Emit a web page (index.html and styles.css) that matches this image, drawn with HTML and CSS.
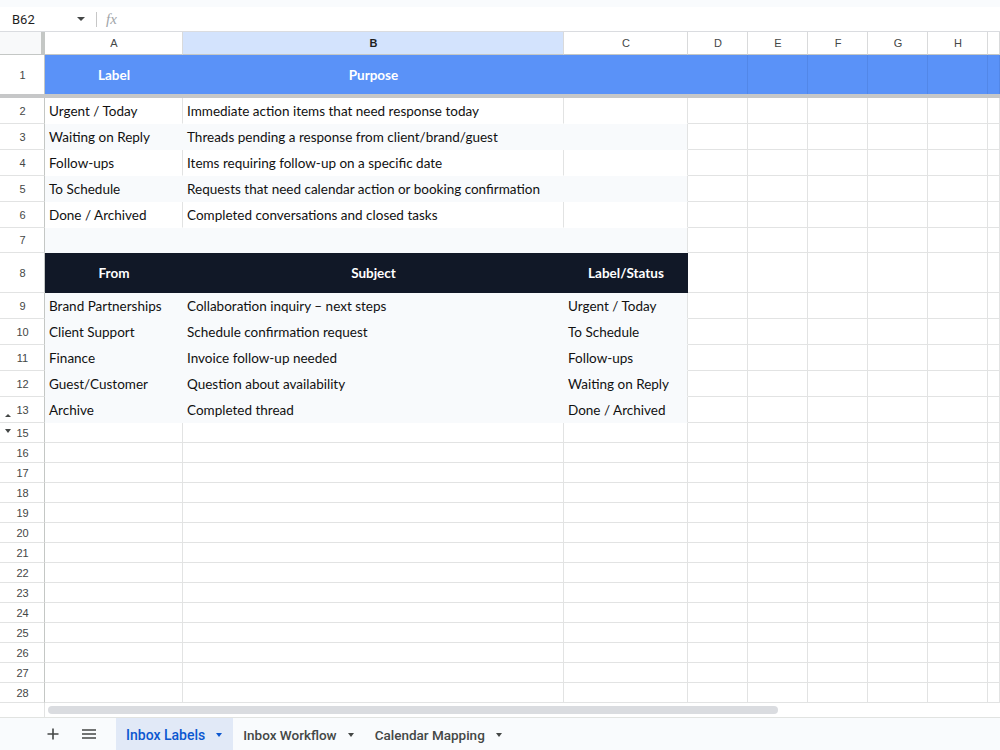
FILE: index.html
```html
<!DOCTYPE html>
<html lang="en">
    <head>
        <meta charset="UTF-8">
        <title>Inbox Labels</title>
        <link rel="stylesheet" href="styles.css">
    </head>
    <body>
        <div class="topstrip"></div>
        <div class="fbar">
            <div class="namebox">B62</div>
            <svg class="caret" width="8" height="4" viewBox="0 0 8 4"><path d="M0 0h8L4 4z" fill="#444746"/></svg>
            <div class="fsep"></div>
            <div class="fx">fx</div>
        </div>

        <div class="row colhead">
            <div class="corner"></div>
            <div>A</div>
            <div class="sel">B</div>
            <div>C</div>
            <div>D</div>
            <div>E</div>
            <div>F</div>
            <div>G</div>
            <div>H</div>
            <div></div>
        </div>

        <!-- header row (frozen) -->
        <div class="row r1">
            <div class="rh">1</div>
            <div class="blue">Label</div>
            <div class="blue">Purpose</div>
            <div class="blue"></div>
            <div class="blue out"></div>
            <div class="blue out"></div>
            <div class="blue out"></div>
            <div class="blue out"></div>
            <div class="blue out"></div>
            <div class="blue out"></div>
        </div>

        <div class="row r26">
            <div class="rh">2</div>
            <div class="plain">Urgent / Today</div>
            <div class="plain">Immediate action items that need response today</div>
            <div class="plain"></div>
            <div></div><div></div><div></div><div></div><div></div><div></div>
        </div>
        <div class="row r26">
            <div class="rh">3</div>
            <div class="band">Waiting on Reply</div>
            <div class="band">Threads pending a response from client/brand/guest</div>
            <div class="band edge"></div>
            <div></div><div></div><div></div><div></div><div></div><div></div>
        </div>
        <div class="row r26">
            <div class="rh">4</div>
            <div class="plain">Follow-ups</div>
            <div class="plain">Items requiring follow-up on a specific date</div>
            <div class="plain"></div>
            <div></div><div></div><div></div><div></div><div></div><div></div>
        </div>
        <div class="row r26">
            <div class="rh">5</div>
            <div class="band">To Schedule</div>
            <div class="band">Requests that need calendar action or booking confirmation</div>
            <div class="band edge"></div>
            <div></div><div></div><div></div><div></div><div></div><div></div>
        </div>
        <div class="row r26">
            <div class="rh">6</div>
            <div class="plain">Done / Archived</div>
            <div class="plain">Completed conversations and closed tasks</div>
            <div class="plain"></div>
            <div></div><div></div><div></div><div></div><div></div><div></div>
        </div>
        <div class="row r25">
            <div class="rh">7</div>
            <div class="band"></div>
            <div class="band"></div>
            <div class="band edge"></div>
            <div></div><div></div><div></div><div></div><div></div><div></div>
        </div>

        <div class="row r8">
            <div class="rh">8</div>
            <div class="dark">From</div>
            <div class="dark">Subject</div>
            <div class="dark">Label/Status</div>
            <div></div><div></div><div></div><div></div><div></div><div></div>
        </div>
        <div class="row r26">
            <div class="rh">9</div>
            <div class="band">Brand Partnerships</div>
            <div class="band">Collaboration inquiry – next steps</div>
            <div class="band edge">Urgent / Today</div>
            <div></div><div></div><div></div><div></div><div></div><div></div>
        </div>
        <div class="row r26">
            <div class="rh">10</div>
            <div class="band">Client Support</div>
            <div class="band">Schedule confirmation request</div>
            <div class="band edge">To Schedule</div>
            <div></div><div></div><div></div><div></div><div></div><div></div>
        </div>
        <div class="row r26">
            <div class="rh">11</div>
            <div class="band">Finance</div>
            <div class="band">Invoice follow-up needed</div>
            <div class="band edge">Follow-ups</div>
            <div></div><div></div><div></div><div></div><div></div><div></div>
        </div>
        <div class="row r26">
            <div class="rh">12</div>
            <div class="band">Guest/Customer</div>
            <div class="band">Question about availability</div>
            <div class="band edge">Waiting on Reply</div>
            <div></div><div></div><div></div><div></div><div></div><div></div>
        </div>
        <div class="row r26">
            <div class="rh"><span class="tri up"></span>13</div>
            <div class="band">Archive</div>
            <div class="band">Completed thread</div>
            <div class="band edge">Done / Archived</div>
            <div></div><div></div><div></div><div></div><div></div><div></div>
        </div>

        <!-- row 14 is hidden -->
        <div class="row r20">
            <div class="rh"><span class="tri down"></span>15</div>
            <div></div><div></div><div></div><div></div><div></div><div></div><div></div><div></div><div></div>
        </div>
        <div class="row r20"><div class="rh">16</div><div></div><div></div><div></div><div></div><div></div><div></div><div></div><div></div><div></div></div>
        <div class="row r20"><div class="rh">17</div><div></div><div></div><div></div><div></div><div></div><div></div><div></div><div></div><div></div></div>
        <div class="row r20"><div class="rh">18</div><div></div><div></div><div></div><div></div><div></div><div></div><div></div><div></div><div></div></div>
        <div class="row r20"><div class="rh">19</div><div></div><div></div><div></div><div></div><div></div><div></div><div></div><div></div><div></div></div>
        <div class="row r20"><div class="rh">20</div><div></div><div></div><div></div><div></div><div></div><div></div><div></div><div></div><div></div></div>
        <div class="row r20"><div class="rh">21</div><div></div><div></div><div></div><div></div><div></div><div></div><div></div><div></div><div></div></div>
        <div class="row r20"><div class="rh">22</div><div></div><div></div><div></div><div></div><div></div><div></div><div></div><div></div><div></div></div>
        <div class="row r20"><div class="rh">23</div><div></div><div></div><div></div><div></div><div></div><div></div><div></div><div></div><div></div></div>
        <div class="row r20"><div class="rh">24</div><div></div><div></div><div></div><div></div><div></div><div></div><div></div><div></div><div></div></div>
        <div class="row r20"><div class="rh">25</div><div></div><div></div><div></div><div></div><div></div><div></div><div></div><div></div><div></div></div>
        <div class="row r20"><div class="rh">26</div><div></div><div></div><div></div><div></div><div></div><div></div><div></div><div></div><div></div></div>
        <div class="row r20"><div class="rh">27</div><div></div><div></div><div></div><div></div><div></div><div></div><div></div><div></div><div></div></div>
        <div class="row r20"><div class="rh">28</div><div></div><div></div><div></div><div></div><div></div><div></div><div></div><div></div><div></div></div>

        <div class="hscroll">
            <div class="scorner"></div>
            <div class="track"><div class="thumb"></div></div>
        </div>

        <div class="tabs">
            <div class="tbtn">
                <svg width="12" height="12" viewBox="0 0 12 12"><path d="M6 0.5v11M0.5 6h11" stroke="#444746" stroke-width="1.6"/></svg>
            </div>
            <div class="tbtn">
                <svg width="14" height="10" viewBox="0 0 14 10"><path d="M0 1h14M0 5h14M0 9h14" stroke="#444746" stroke-width="1.5"/></svg>
            </div>
            <div class="tab active">Inbox Labels <span class="arrow"></span></div>
            <div class="tab">Inbox Workflow <span class="arrow"></span></div>
            <div class="tab">Calendar Mapping <span class="arrow"></span></div>
        </div>
    </body>
</html>
```

FILE: styles.css
```css
* {
    box-sizing: border-box;
}
body {
    margin: 0;
    width: 1000px;
    height: 750px;
    overflow: hidden;
    background-color: #fff;
    font-family: "Lato", "Liberation Sans", sans-serif;
}
.topstrip {
    height: 7px;
    background-color: #f9fbfd;
}
.fbar {
    display: flex;
    align-items: center;
    height: 25px;
    border-bottom: 1px solid #dadce0;
    font-family: Roboto, "Liberation Sans", sans-serif;
}
.namebox {
    width: 77px;
    padding-left: 12px;
    font-size: 13px;
    color: #1f1f1f;
}
.caret {
    margin-right: 11px;
}
.fsep {
    width: 1px;
    height: 15px;
    background-color: #c7c7c7;
}
.fx {
    margin-left: 9px;
    font-family: "Liberation Serif", serif;
    font-style: italic;
    font-size: 15px;
    color: #a0a4a8;
}

/* grid */
.row {
    display: grid;
    grid-template-columns: 45px 138px 381px 124px 60px 60px 60px 60px 60px 1fr;
}
.row > div {
    display: flex;
    align-items: center;
    padding: 0 3px 0 4px;
    white-space: nowrap;
    overflow: hidden;
    border-right: 1px solid #e2e3e3;
    border-bottom: 1px solid #e2e3e3;
    font-size: 13.5px;
    color: #111;
}
.r1 { height: 43px; border-bottom: 4px solid #c6c7c8; }
.r26 { height: 26px; }
.r25 { height: 25px; }
.r8 { height: 40px; }
.r20 { height: 20px; }

.colhead {
    height: 23px;
}
.colhead > div {
    justify-content: center;
    font-family: "Liberation Sans", Arial, sans-serif;
    font-size: 11px;
    color: #444746;
    border-right-color: #d9dadb;
    border-bottom-color: #c4c7c5;
}
.colhead > .corner {
    background-color: #f8f9fa;
    border-right: 4px solid #c4c7c5;
}
.colhead > .sel {
    background-color: #d3e3fd;
    color: #1f1f1f;
    font-weight: bold;
}
.row > .rh {
    position: relative;
    justify-content: center;
    font-family: "Liberation Sans", Arial, sans-serif;
    font-size: 11px;
    color: #444746;
    border-right-color: #c4c7c5;
}
.r1 > .rh {
    border-bottom: none;
}
.tri {
    position: absolute;
    left: 5px;
    width: 0;
    height: 0;
    border-left: 3px solid transparent;
    border-right: 3px solid transparent;
}
.tri.up {
    bottom: 5px;
    border-bottom: 3px solid #444746;
}
.tri.down {
    top: 6px;
    border-top: 4px solid #444746;
}

.row > .blue {
    justify-content: center;
    background-color: #5a92f8;
    border-color: #5a92f8;
    border-bottom: none;
    color: #fff;
    font-weight: bold;
}
.row > .blue.out {
    border-right-color: #5287e8;
}
.row > .plain {
    border-bottom-color: #fff;
}
.row > .band {
    background-color: #f8fafc;
    border-color: #f8fafc;
}
.row > .band.edge {
    border-right-color: #e2e3e3;
}
.row > .dark {
    justify-content: center;
    background-color: #111827;
    border-color: #111827;
    color: #fff;
    font-weight: bold;
}

/* bottom */
.hscroll {
    display: flex;
    height: 15px;
    border-bottom: 1px solid #e1e3e1;
}
.scorner {
    width: 45px;
    border-right: 1px solid #e2e3e3;
}
.track {
    flex: 1;
    padding: 3px 0 0 3px;
}
.thumb {
    width: 730px;
    height: 8px;
    border-radius: 4px;
    background-color: #dadce0;
}
.tabs {
    display: flex;
    align-items: stretch;
    height: 32px;
    padding-left: 35px;
    background-color: #f9fbfd;
    font-family: Roboto, "Liberation Sans", sans-serif;
    font-size: 13.5px;
    font-weight: 500;
    color: #444746;
}
.tbtn {
    display: flex;
    align-items: center;
    justify-content: center;
    width: 36px;
}
.tab {
    display: flex;
    align-items: center;
    gap: 11px;
    padding: 1px 11px 0 10px;
}
.tab.active {
    margin-left: 9px;
    background-color: #e1e9f7;
    color: #0b57d0;
    font-size: 14px;
}
.arrow {
    width: 0;
    height: 0;
    border-left: 3.5px solid transparent;
    border-right: 3.5px solid transparent;
    border-top: 4px solid #444746;
}
.tab.active .arrow {
    border-top-color: #0b57d0;
}
```
